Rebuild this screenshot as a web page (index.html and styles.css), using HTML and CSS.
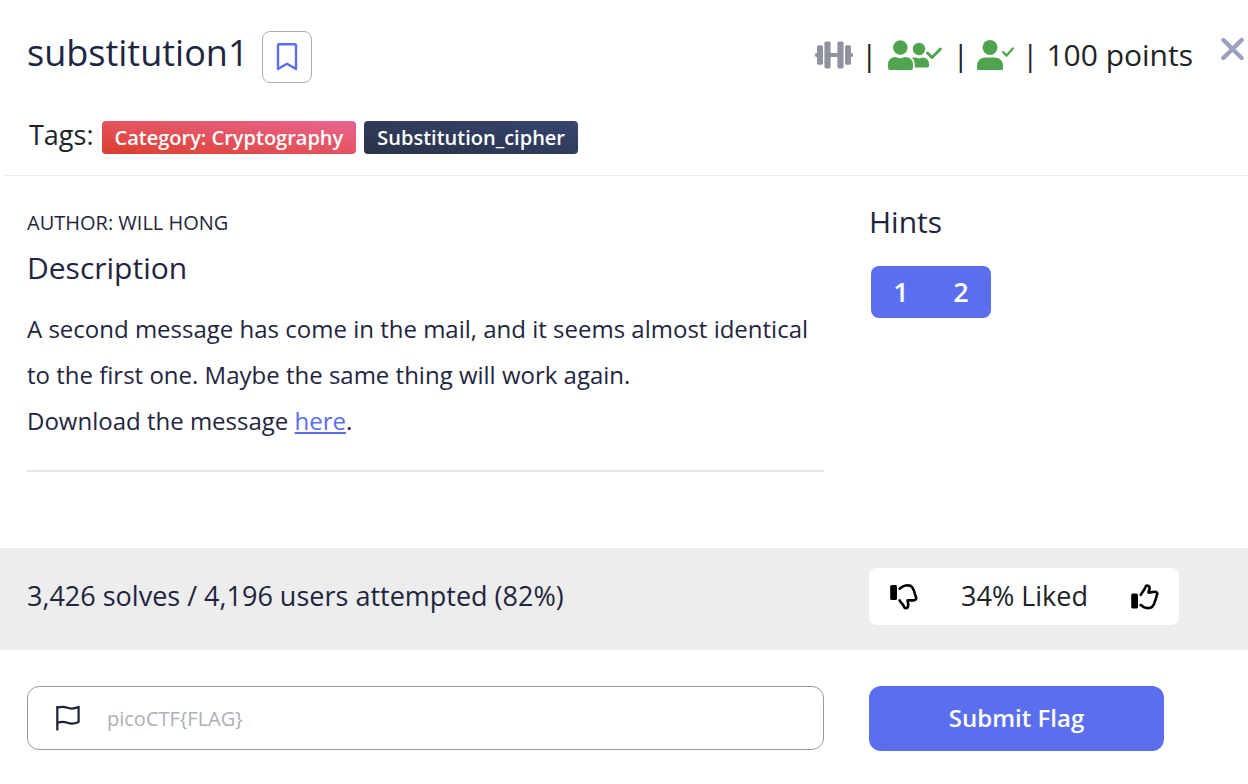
FILE: index.html
```html
<!DOCTYPE html>
<html lang="en">
<head>
<meta charset="utf-8">
<title>substitution1</title>
<link rel="stylesheet" href="styles.css">
</head>
<body>
<main class="challenge">
  <header class="header">
    <div class="top">
      <div class="heading">
        <h1 class="title">substitution1</h1>
        <button class="bookmark" type="button" aria-label="Bookmark">
          <svg width="22" height="28" viewBox="0 0 22 28" fill="none" stroke="#5a6eee" stroke-width="2.4" stroke-linejoin="round"><path d="M2 2.2Q2 1.2 3 1.2H19Q20 1.2 20 2.2V26L11 20.7L2 26Z"/></svg>
        </button>
      </div>
      <div class="summary">
        <div class="stats">
          <svg width="38" height="28" viewBox="815 41 38 28" fill="#9092a0"><rect x="815" y="53" width="3" height="4" rx="1.4"/><rect x="817" y="45.2" width="6" height="19.6" rx="1.6"/><rect x="824.4" y="41.6" width="6.2" height="26.8" rx="1.6"/><rect x="830" y="53" width="8" height="4"/><rect x="837.4" y="41.6" width="6.2" height="26.8" rx="1.6"/><rect x="845" y="45.2" width="6" height="19.6" rx="1.6"/><rect x="850" y="53" width="3" height="4" rx="1.4"/></svg>
          <span>|</span>
          <svg width="59" height="32" viewBox="885 39 59 32" fill="#50a450"><circle cx="900.3" cy="47.6" r="7.3"/><path d="M888 68V65Q888 57 896 57Q900.3 59.5 904.6 57Q913 57 913 65V68Q913 70 911 70H890Q888 70 888 68Z"/><circle cx="919" cy="49" r="6.2"/><path d="M912 57.6H915.8Q919 59.2 922.2 57.6Q929 57.8 929 64V65.8Q929 67.4 927.4 67.4H914.8V65Q914.8 60.5 912 57.6Z"/><path d="M927.5 53L932 57.5L940.4 49" fill="none" stroke="#50a450" stroke-width="3" stroke-linecap="round" stroke-linejoin="round"/></svg>
          <span>|</span>
          <svg width="37" height="32" viewBox="977 39 37 32" fill="#50a450"><circle cx="990" cy="47.4" r="7.5"/><path d="M977 68.4V66.5Q977 57.6 986 57.6H994Q1003 57.6 1003 66.5V68.4Q1003 70 1001.4 70H978.6Q977 70 977 68.4Z"/><path d="M1003.2 52.2L1006.6 55.6L1012.8 48.4" fill="none" stroke="#50a450" stroke-width="2.3" stroke-linecap="round" stroke-linejoin="round"/></svg>
          <span>|</span>
          <span>100 points</span>
        </div>
        <button class="close" type="button" aria-label="Close">
          <svg width="24" height="24" viewBox="0 0 24 24" fill="none" stroke="#9aa1ba" stroke-width="4.4" stroke-linecap="round"><path d="M2.4 3L20.6 21M20.6 3L2.4 21"/></svg>
        </button>
      </div>
    </div>
    <div class="tags">
      <span class="tags-label">Tags:</span>
      <span class="tag tag-category">Category: Cryptography</span>
      <span class="tag tag-topic">Substitution_cipher</span>
    </div>
  </header>

  <div class="columns body">
    <section class="details">
      <p class="author">AUTHOR: WILL HONG</p>
      <h2 class="subtitle">Description</h2>
      <p class="text">A second message has come in the mail, and it seems almost identical to the first one. Maybe the same thing will work again.<br>Download the message <a class="link" href="#">here</a>.</p>
    </section>
    <section class="hints">
      <h2 class="subtitle">Hints</h2>
      <div class="hint-group">
        <button class="hint" type="button">1</button><button class="hint" type="button">2</button>
      </div>
    </section>
  </div>

  <div class="columns solves">
    <p class="solves-text">3,426 solves / 4,196 users attempted (82%)</p>
    <div class="rating">
      <button class="thumb" type="button" aria-label="Dislike">
        <svg width="28" height="26" viewBox="0 0 28 26"><rect x="0.2" y="1" width="6.8" height="15" rx="1.6"/><path d="M9.6 4.6C11.8 3.4 12.6 1.9 15.8 1.5C18.4 1.2 21.4 2 22.2 3.2C23 4.4 22.8 4.8 23.6 6C24.6 7.3 24.2 8 24.8 9.5C25.5 11 25.2 11.6 26 13C26.6 15 25.4 16.4 23.6 16.4H17.6C17.6 18.2 18.4 19.2 18.2 21.4C18 24.8 14.6 25 13.8 22.4C13.2 19.4 10.4 18.8 9.6 16.4" fill="none" stroke="#000" stroke-width="2.6" stroke-linecap="round" stroke-linejoin="round"/></svg>
      </button>
      <span class="rating-text">34% Liked</span>
      <button class="thumb" type="button" aria-label="Like">
        <svg width="28" height="26" viewBox="0 0 28 26"><rect x="0.2" y="9.6" width="6.8" height="15" rx="1.6"/><path d="M9.8 10.8C11.4 7.6 13.4 6.4 14.4 3.2C15.4 .8 18.6 1.2 18.6 4.4C18.6 6 17.4 7 17.6 8.6L23.6 7.8C26.2 7.6 27 9.6 25.6 11.4C25.8 13 25 13.6 24.8 15C24.6 16.6 23.6 17.2 23.4 18.8C23.2 20.8 21.8 21.4 21.4 22.4C20.6 24.6 16 24.2 13.8 23.6C11.8 23 11.4 21.6 9.6 21" fill="none" stroke="#000" stroke-width="2.6" stroke-linecap="round" stroke-linejoin="round"/></svg>
      </button>
    </div>
  </div>

  <form class="columns submit">
    <label class="field">
      <svg width="24" height="26" viewBox="0 0 24 26" fill="none" stroke="#1c2338" stroke-width="2.2" stroke-linejoin="round"><path d="M1.3 1V25.5M1.3 3C5 1.2 8 1.4 11.5 2.8C15 4.2 19 3.4 22.6 2V17C19 18.8 15 19.2 11.5 17.8C8 16.4 5 16.2 1.3 18"/></svg>
      <input class="flag-input" type="text" placeholder="picoCTF{FLAG}" aria-label="Flag">
    </label>
    <button class="submit-button" type="submit">Submit Flag</button>
  </form>
</main>
</body>
</html>
```
FILE: styles.css
```css
* {
  box-sizing: border-box;
}

body {
  margin: 0;
  background: #fff;
  color: #1f2540;
  font-family: "Open Sans", "Noto Sans", sans-serif;
  overflow-x: hidden;
}

h1, h2, p {
  margin: 0;
  font-weight: 400;
}

button, input {
  font: inherit;
}

svg {
  display: block;
  flex: none;
}

.header {
  margin-left: 5px;
  padding: 30px 0 21px 22px;
  border-bottom: 1px solid #ebebec;
}

.top {
  display: flex;
  justify-content: space-between;
  align-items: flex-start;
}

.heading {
  display: flex;
  gap: 14px;
}

.title {
  font-size: 36px;
  line-height: 46px;
}

.bookmark {
  display: flex;
  align-items: center;
  justify-content: center;
  width: 50px;
  height: 52px;
  margin-top: 1px;
  padding: 0;
  border: 1px solid #a9aebb;
  border-radius: 8px;
  background: #fff;
}

.summary {
  display: flex;
  align-items: flex-start;
  gap: 28px;
  padding-right: 3px;
}

.stats {
  display: flex;
  align-items: center;
  gap: 8px;
  color: #212226;
  font-size: 30px;
  line-height: 50px;
}

.close {
  padding: 7px 0;
  border: 0;
  background: none;
}

.tags {
  display: flex;
  align-items: flex-start;
  gap: 8px;
  margin-top: 38px;
}

.tags-label {
  padding-left: 2px;
  color: #212226;
  font-size: 27px;
  line-height: 28px;
}

.tag {
  padding: 0 13px;
  border-radius: 4px;
  color: #fff;
  font-size: 20px;
  font-weight: 600;
  line-height: 33px;
}

.tag-category {
  background: linear-gradient(to top right, #db3e2c, #e4545f 50%, #e96592);
}

.tag-topic {
  background: linear-gradient(to top right, #2a3347, #364470);
}

.columns {
  display: grid;
  grid-template-columns: minmax(0, 797fr) minmax(0, 379fr);
  column-gap: 45px;
  padding-left: 27px;
}

.body {
  padding-top: 26px;
  padding-bottom: 76px;
}

.details {
  padding-bottom: 26px;
  border-bottom: 2px solid #e6e6e8;
}

.author {
  font-size: 20px;
  line-height: 42px;
}

.subtitle {
  font-size: 30px;
  line-height: 40px;
}

.details .subtitle {
  margin-top: 4px;
}

.text {
  margin-top: 18px;
  font-size: 24px;
  line-height: 46px;
}

.link {
  color: #5a6eee;
}

.hint-group {
  display: inline-flex;
  margin: 24px 2px 0;
  border-radius: 8px;
  background: #5a6eee;
}

.hint {
  width: 60px;
  height: 52px;
  padding: 0 0 2px;
  border: 0;
  background: none;
  color: #fff;
  font-size: 27px;
  font-weight: 600;
}

.solves {
  align-items: center;
  padding-top: 20px;
  padding-bottom: 25px;
  background: #ededed;
}

.solves-text,
.rating-text {
  padding-bottom: 2px;
  font-size: 27px;
}

.rating {
  display: flex;
  align-items: center;
  justify-content: space-between;
  width: 310px;
  height: 57px;
  padding: 0 20px 0 21px;
  border-radius: 8px;
  background: #fff;
  color: #212226;
}

.thumb {
  padding: 0;
  border: 0;
  background: none;
}

.submit {
  padding-top: 36px;
}

.field {
  display: flex;
  align-items: center;
  gap: 27px;
  height: 64px;
  padding: 0 28px;
  border: 1px solid #9699a6;
  border-radius: 12px;
}

.flag-input {
  flex: 1;
  min-width: 0;
  padding: 0;
  border: 0;
  outline: 0;
  background: none;
  color: #1f2540;
  font-size: 20px;
}

.flag-input::placeholder {
  color: #adafb9;
}

.submit-button {
  width: 295px;
  height: 65px;
  padding: 0 0 2px;
  border: 0;
  border-radius: 12px;
  background: #5a6eee;
  color: #fff;
  font-size: 24px;
  font-weight: 600;
}
```
